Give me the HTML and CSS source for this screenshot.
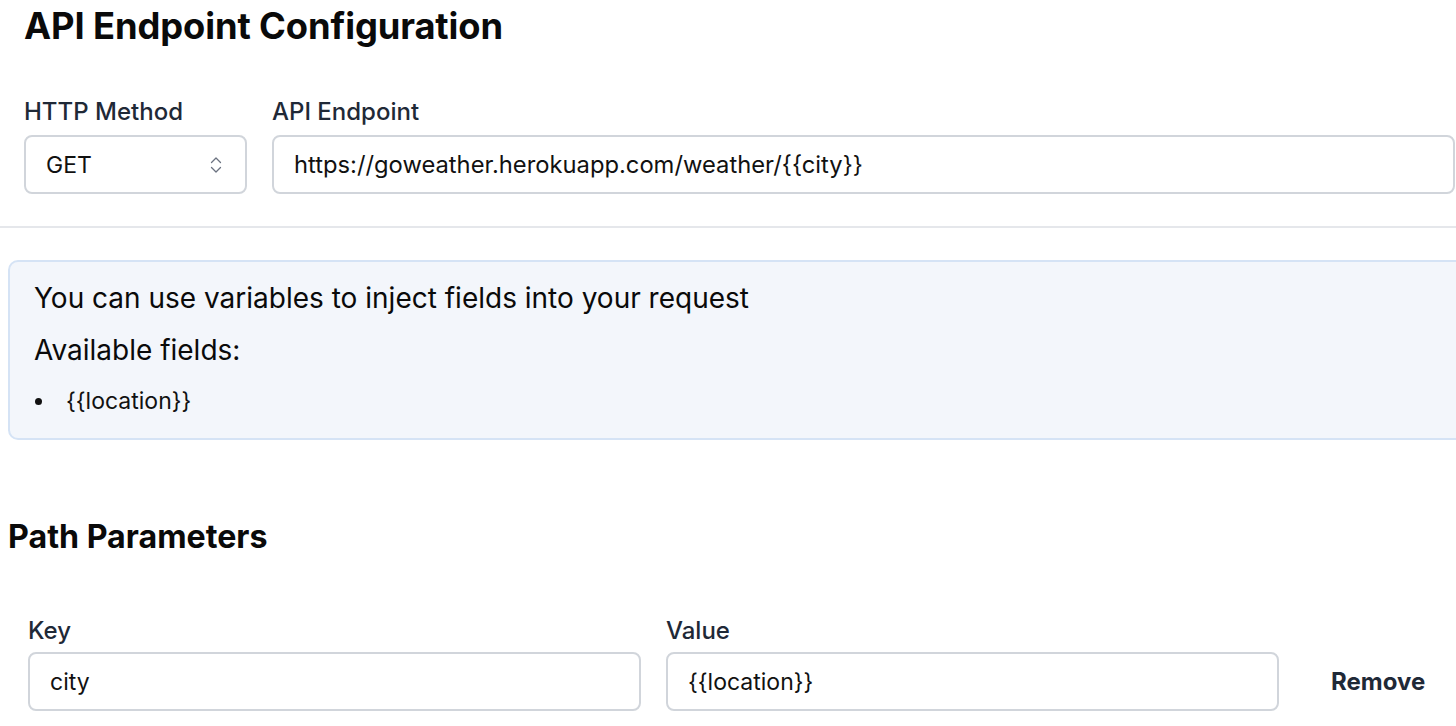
FILE: index.html
```html
<!DOCTYPE html>
<html>
<head>
<meta charset="utf-8">
<link rel="stylesheet" href="styles.css">
</head>
<body>
<div class="page">
  <section class="config">
    <h1 class="title">API Endpoint Configuration</h1>
    <div class="row">
      <div class="field method">
        <label class="label">HTTP Method</label>
        <div class="select">
          <span>GET</span>
          <svg class="chev" width="12" height="18" viewBox="0 0 12 18" fill="none" stroke="#6b7280" stroke-width="1.3" stroke-linecap="round" stroke-linejoin="round"><path d="M1.5 6.5 L6 2 L10.5 6.5"/><path d="M1.5 11.5 L6 16 L10.5 11.5"/></svg>
        </div>
      </div>
      <div class="field endpoint">
        <label class="label">API Endpoint</label>
        <div class="input url">https://goweather.herokuapp.com/weather/{{city}}</div>
      </div>
    </div>
  </section>
  <hr class="divider">
  <div class="info">
    <p class="info-line">You can use variables to inject fields into your request</p>
    <p class="info-line">Available fields:</p>
    <ul class="fields">
      <li class="field-item">{{location}}</li>
    </ul>
  </div>
  <h2 class="subtitle">Path Parameters</h2>
  <div class="params">
    <div class="field key">
      <label class="label param-label">Key</label>
      <div class="input">city</div>
    </div>
    <div class="field value">
      <label class="label param-label">Value</label>
      <div class="input">{{location}}</div>
    </div>
    <button class="remove">Remove</button>
  </div>
</div>
</body>
</html>
```

FILE: styles.css
```css
html, body {
  margin: 0;
  padding: 0;
  background: #ffffff;
  overflow: hidden;
}
body {
  font-family: Inter, "Noto Sans", sans-serif;
  color: #111827;
  width: 1456px;
  height: 726px;
}
.page {
  width: 1456px;
}
.config {
  padding: 0 0 0 24px;
}
.title {
  margin: 0;
  padding-top: 4px;
  font-size: 36.3px;
  font-weight: 700;
  line-height: 44px;
  letter-spacing: -0.1px;
  color: #0a0a0a;
}
.row {
  display: flex;
  gap: 25px;
  margin-top: 49px;
}
.field {
  display: flex;
  flex-direction: column;
}
.label {
  font-size: 24px;
  font-weight: 500;
  line-height: 28px;
  color: #1f2937;
  margin-bottom: 9px;
  padding-top: 1px;
}
.param-label {
  margin-bottom: 7px;
  padding-top: 0;
}
.method {
  width: 223px;
}
.endpoint {
  width: 1183px;
}
.select, .input {
  box-sizing: border-box;
  height: 59px;
  border: 2px solid #d1d5db;
  border-radius: 8px;
  display: flex;
  align-items: center;
  padding: 0 20px;
  font-size: 23px;
  color: #111111;
  background: #fff;
}
.url {
  font-size: 23.75px;
}
.select {
  justify-content: space-between;
  padding-right: 23px;
}
.chev {
  display: block;
}
.divider {
  margin: 32px 0 0 0;
  border: 0;
  border-top: 2px solid #e5e7eb;
}
.info {
  box-sizing: border-box;
  margin: 32px 0 0 8px;
  width: 1470px;
  height: 180px;
  background: #f3f6fb;
  border: 2px solid #d5e3f5;
  border-radius: 10px;
  padding: 17px 24px;
}
.info-line {
  margin: 0 0 14px 0;
  font-size: 28px;
  line-height: 38px;
  color: #0a0a0a;
}
.fields {
  list-style: none;
  margin: 16px 0 0 0;
  padding: 0;
  font-size: 23px;
  line-height: 32px;
  color: #111;
}
.field-item {
  position: relative;
  padding-left: 32px;
}
.field-item::before {
  content: "";
  position: absolute;
  left: 1px;
  top: 13px;
  width: 7px;
  height: 7px;
  border-radius: 50%;
  background: #111;
}
.subtitle {
  margin: 77px 0 0 8px;
  font-size: 32.2px;
  font-weight: 700;
  line-height: 40px;
  color: #0a0a0a;
}
.params {
  display: flex;
  align-items: flex-end;
  gap: 25px;
  margin-top: 60px;
  padding-left: 28px;
}
.key, .value {
  width: 613px;
}
.remove {
  border: 0;
  background: none;
  font-family: inherit;
  font-size: 24px;
  font-weight: 700;
  color: #1f2937;
  height: 59px;
  padding: 0 0 0 27px;
  margin-left: 0;
}
```
